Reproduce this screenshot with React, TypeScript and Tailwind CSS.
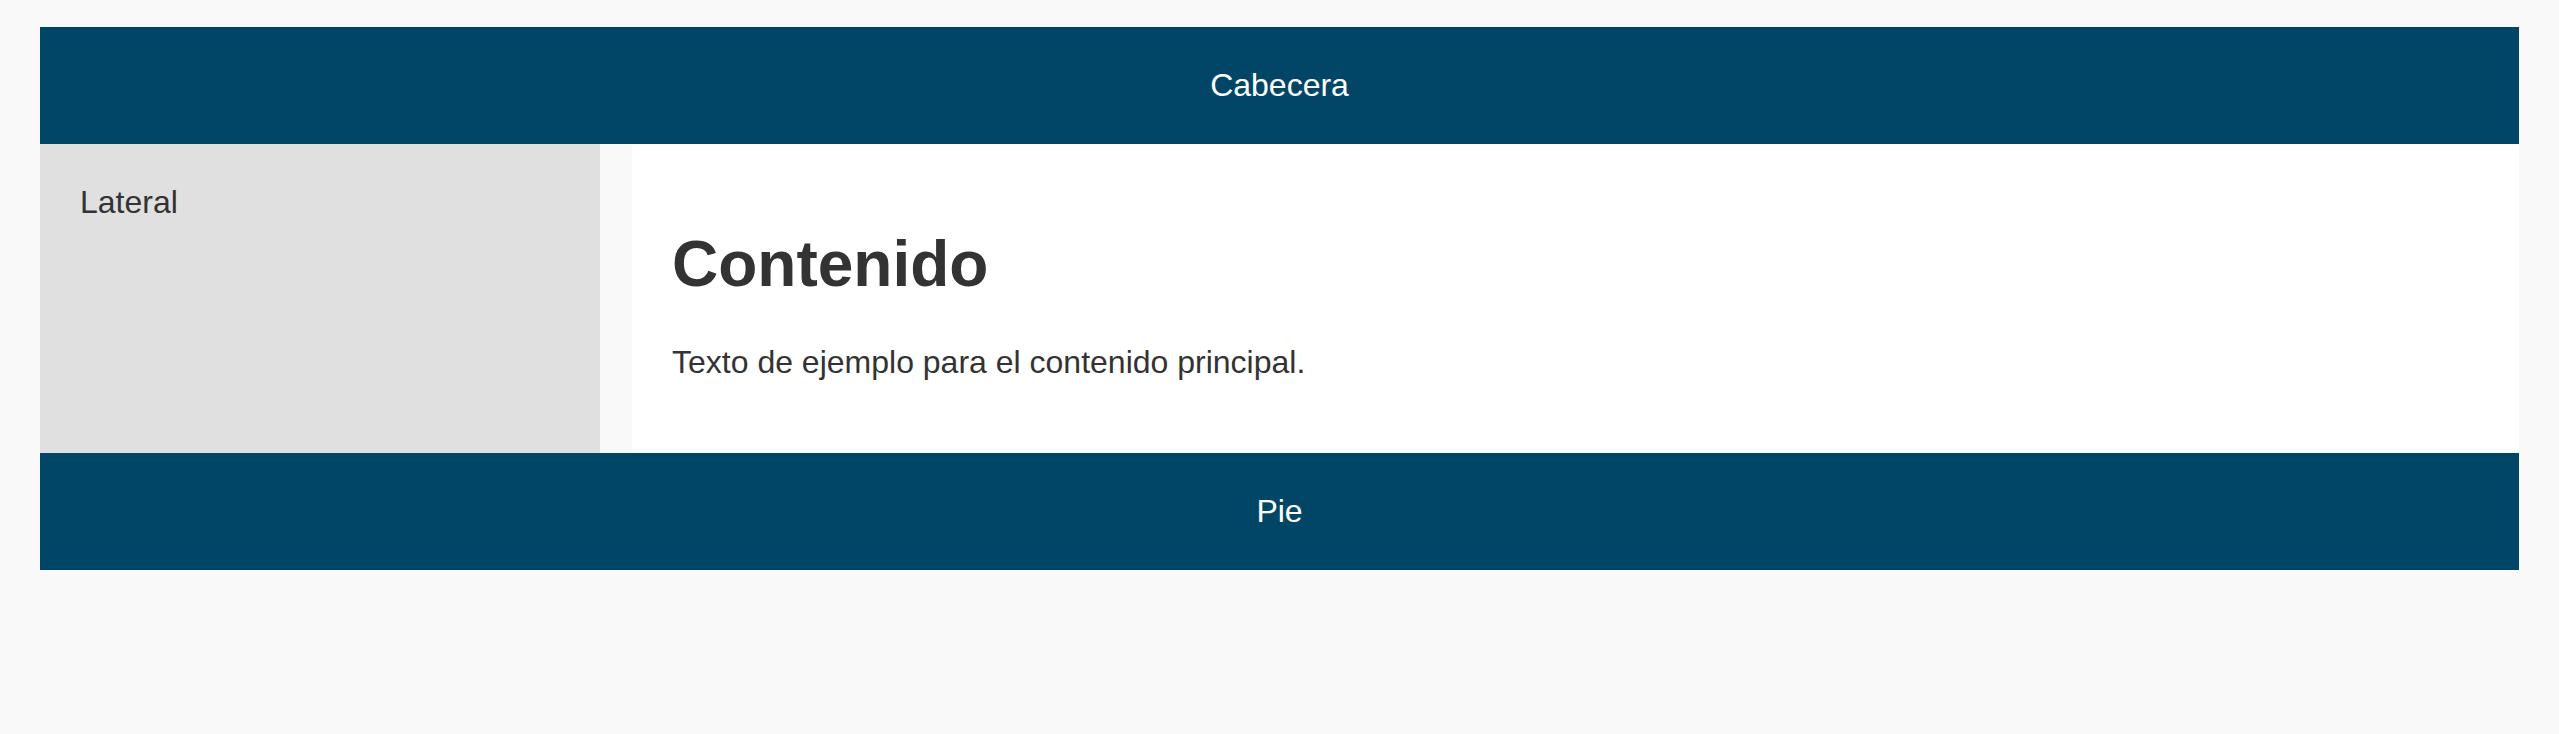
export default function App() {
  return (
    <div
      className="min-h-screen bg-[#f9f9f9] px-[40px] pt-[27px] text-[#333]"
      style={{ fontFamily: '"Liberation Sans", Arial, sans-serif' }}
    >
      <div className="grid grid-cols-[560px_1fr] gap-x-[32px]">
        <header className="col-span-2 bg-[#014666] p-[40px] text-center text-[32px] leading-[37px] text-white">
          Cabecera
        </header>

        <aside className="bg-[#e0e0e0] p-[40px] text-[32px] leading-[37px]">Lateral</aside>

        <main className="bg-white p-[40px]">
          <h1 className="my-[43px] text-[64px] font-bold leading-[74px]">Contenido</h1>
          <p className="mb-[32px] text-[32px] leading-[37px]">
            Texto de ejemplo para el contenido principal.
          </p>
        </main>

        <footer className="col-span-2 bg-[#014666] p-[40px] text-center text-[32px] leading-[37px] text-white">
          Pie
        </footer>
      </div>
    </div>
  );
}
